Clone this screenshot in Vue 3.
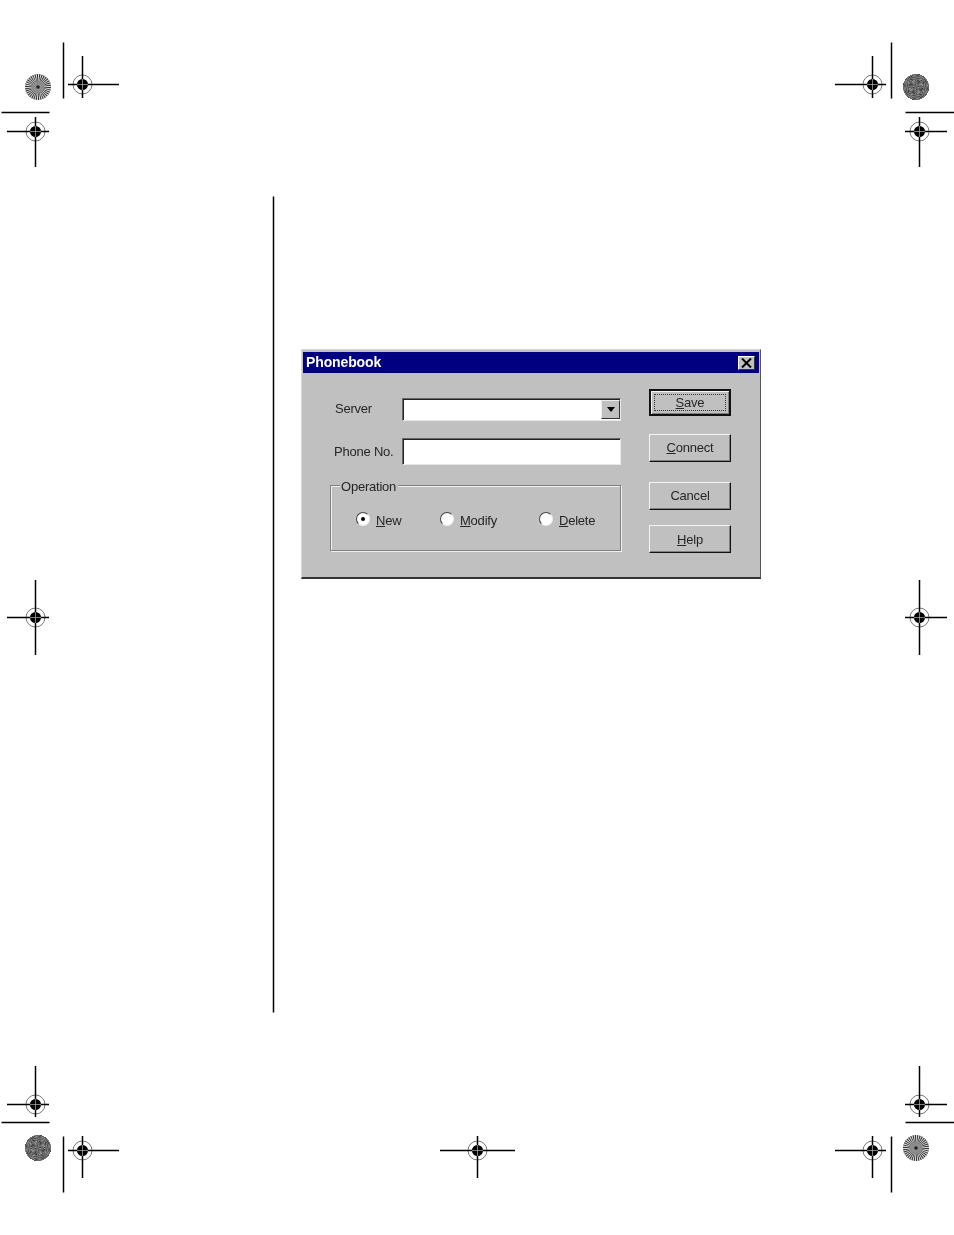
<script setup>
const marks = [
  { x: 82, y: 84, x1: 68, x2: 119, y1: 56, y2: 98 },
  { x: 35, y: 131, x1: 7, x2: 49, y1: 117, y2: 167 },
  { x: 872, y: 84, x1: 835, x2: 886, y1: 56, y2: 98 },
  { x: 919, y: 131, x1: 905, x2: 947, y1: 117, y2: 167 },
  { x: 35, y: 617, x1: 7, x2: 49, y1: 580, y2: 655 },
  { x: 919, y: 617, x1: 905, x2: 947, y1: 580, y2: 655 },
  { x: 35, y: 1104, x1: 7, x2: 49, y1: 1066, y2: 1117 },
  { x: 919, y: 1104, x1: 905, x2: 947, y1: 1066, y2: 1117 },
  { x: 82, y: 1150, x1: 68, x2: 119, y1: 1136, y2: 1178 },
  { x: 477, y: 1150, x1: 440, x2: 515, y1: 1136, y2: 1178 },
  { x: 872, y: 1150, x1: 835, x2: 886, y1: 1136, y2: 1178 }
]

const rules = [
  [63, 42, 63, 98], [891, 42, 891, 98],
  [63, 1136, 63, 1192], [891, 1136, 891, 1192],
  [1, 112, 49, 112], [905, 112, 954, 112],
  [1, 1122, 49, 1122], [905, 1122, 954, 1122],
  [273, 196, 273, 1012]
]

function wedges(cx, cy, r, count) {
  const out = []
  const step = (Math.PI * 2) / count
  for (let i = 0; i < count; i++) {
    const a = i * step
    const b = a + step / 2
    const p = (t) => `${(cx + r * Math.cos(t)).toFixed(2)},${(cy + r * Math.sin(t)).toFixed(2)}`
    out.push(`${cx},${cy} ${p(a)} ${p(b)}`)
  }
  return out
}

function moire(cx, cy, r) {
  const out = []
  for (let dy = -r; dy < r; dy++) {
    for (let dx = -r; dx < r; dx++) {
      const px = dx + 0.5
      const py = dy + 0.5
      const d = Math.hypot(px, py)
      if (d > r) continue
      const a = Math.atan2(py, px)
      const wave = Math.sin(a * 60) * Math.cos(d * 1.4) + 0.6 * Math.sin(a * 4) * Math.sin(d * 0.8)
      const g = Math.round(Math.max(50, Math.min(165, 105 + 42 * wave)))
      out.push({ x: cx + dx, y: cy + dy, fill: `rgb(${g},${g},${g})` })
    }
  }
  return out
}

const spokeDiscs = [
  { x: 38, y: 87 },
  { x: 916, y: 1148 }
].map((d) => ({ ...d, polys: wedges(d.x, d.y, 13, 34) }))

const moireDiscs = [
  { x: 916, y: 87 },
  { x: 38, y: 1148 }
].map((d) => ({ ...d, pixels: moire(d.x, d.y, 13) }))

const options = [
  { key: 'N', rest: 'ew', checked: true, cls: 'opt-new' },
  { key: 'M', rest: 'odify', checked: false, cls: 'opt-modify' },
  { key: 'D', rest: 'elete', checked: false, cls: 'opt-delete' }
]
</script>

<template>
  <div class="page">
    <svg class="marks" width="954" height="1235" viewBox="0 0 954 1235">
      <line v-for="(r, i) in rules" :key="'r' + i" :x1="r[0] + 0.5" :y1="r[1] + 0.5" :x2="r[2] + 0.5" :y2="r[3] + 0.5" stroke="#000" stroke-width="1.5" />
      <g v-for="(d, i) in spokeDiscs" :key="'s' + i">
        <circle :cx="d.x" :cy="d.y" r="13" fill="#dcdcdc" />
        <polygon v-for="(p, j) in d.polys" :key="j" :points="p" fill="#333" />
        <circle :cx="d.x" :cy="d.y" r="6" fill="#8a8a8a" fill-opacity="0.55" />
        <circle :cx="d.x" :cy="d.y" r="1.8" fill="#222" />
      </g>
      <g v-for="(d, i) in moireDiscs" :key="'d' + i">
        <rect v-for="(p, j) in d.pixels" :key="j" :x="p.x" :y="p.y" width="1" height="1" :fill="p.fill" />
      </g>
      <g v-for="(m, i) in marks" :key="'m' + i">
        <circle :cx="m.x + 0.5" :cy="m.y + 0.5" r="9.5" fill="none" stroke="#777" stroke-width="1" />
        <circle :cx="m.x + 0.5" :cy="m.y + 0.5" r="5.5" fill="#000" />
        <line :x1="m.x1" :y1="m.y + 0.5" :x2="m.x2" :y2="m.y + 0.5" stroke="#000" stroke-width="1.5" />
        <line :x1="m.x + 0.5" :y1="m.y1" :x2="m.x + 0.5" :y2="m.y2" stroke="#000" stroke-width="1.5" />
        <line :x1="m.x - 5" :y1="m.y + 0.5" :x2="m.x + 6" :y2="m.y + 0.5" stroke="#ccc" stroke-width="0.6" />
        <line :x1="m.x + 0.5" :y1="m.y - 5" :x2="m.x + 0.5" :y2="m.y + 6" stroke="#ccc" stroke-width="0.6" />
      </g>
    </svg>

    <div class="dialog">
      <div class="title">
        <span class="title-text">Phonebook</span>
        <span class="close">
          <svg width="11" height="10" viewBox="0 0 11 10"><path d="M1 0.5 L10 9.5 M10 0.5 L1 9.5" stroke="#000" stroke-width="2" fill="none" /></svg>
        </span>
      </div>
      <div class="body">
        <div class="form">
          <div class="row row-server">
            <span class="label label-server">Server</span>
            <div class="field field-combo">
              <span class="drop"><span class="arrow"></span></span>
            </div>
          </div>
          <div class="row row-phone">
            <span class="label label-phone">Phone No.</span>
            <div class="field field-phone"></div>
          </div>
          <div class="group">
            <span class="legend">Operation</span>
            <div v-for="o in options" :key="o.key" class="option" :class="o.cls">
              <span class="radio"><span v-if="o.checked" class="dot"></span></span>
              <span class="opt-text"><u>{{ o.key }}</u>{{ o.rest }}</span>
            </div>
          </div>
        </div>
        <div class="buttons">
          <div class="btn btn-default"><span class="focus"><u>S</u>ave</span></div>
          <div class="btn btn-connect"><span class="btn-text"><u>C</u>onnect</span></div>
          <div class="btn btn-cancel"><span class="btn-text">Cancel</span></div>
          <div class="btn btn-help"><span><u>H</u>elp</span></div>
        </div>
      </div>
    </div>
  </div>
</template>

<style scoped>
.page {
  position: relative;
  width: 954px;
  height: 1235px;
  box-sizing: border-box;
  padding: 349px 0 0 301px;
  background: #fff;
  overflow: hidden;
  font-family: "Liberation Sans", Arial, sans-serif;
  color: #262626;
}
.marks {
  position: absolute;
  left: 0;
  top: 0;
  filter: blur(0.35px);
}
.dialog {
  position: relative;
  width: 460px;
  height: 230px;
  box-sizing: border-box;
  background: #c0c0c0;
  border-top: 1px solid #d8d8d8;
  border-left: 1px solid #d8d8d8;
  border-right: 1px solid #555;
  border-bottom: 2px solid #333;
  padding: 2px 1px 0;
  filter: blur(0.4px);
}
.title {
  height: 21px;
  background: #000080;
  color: #fff;
  font-size: 14px;
  font-weight: 700;
  display: flex;
  align-items: center;
  justify-content: space-between;
  padding: 0 4px 0 3px;
}
.title-text {
  letter-spacing: -0.12px;
  margin-top: -2px;
}
.close {
  width: 17px;
  height: 14px;
  box-sizing: border-box;
  background: #c0c0c0;
  border: 1px solid;
  border-color: #fff #333 #333 #fff;
  display: flex;
  align-items: center;
  justify-content: center;
}
.body {
  display: flex;
  align-items: flex-start;
  padding: 16px 0 0 27px;
  font-size: 13px;
  letter-spacing: -0.22px;
}
.form {
  width: 291px;
  margin-top: 9px;
}
.row {
  display: flex;
  align-items: center;
}
.row-server {
  height: 23px;
}
.row-phone {
  height: 27px;
  margin-top: 17px;
}
.label {
  width: 68px;
  margin-right: 4px;
  box-sizing: border-box;
  flex: none;
}
.label-server {
  padding-left: 5px;
  margin-top: -2px;
}
.label-phone {
  padding-left: 4px;
  white-space: nowrap;
}
.field {
  flex: 1;
  height: 100%;
  box-sizing: border-box;
  background: #fff;
  border: 1px solid;
  border-color: #666 #e8e8e8 #e8e8e8 #666;
  box-shadow: inset 1px 1px 0 #222;
  display: flex;
  justify-content: flex-end;
}
.drop {
  width: 19px;
  margin: 1px 0;
  box-sizing: border-box;
  background: #c0c0c0;
  border: 1px solid;
  border-color: #eee #333 #333 #eee;
  display: flex;
  align-items: center;
  justify-content: center;
}
.arrow {
  width: 0;
  height: 0;
  border-left: 4px solid transparent;
  border-right: 4px solid transparent;
  border-top: 5px solid #000;
}
.group {
  position: relative;
  display: flex;
  height: 66px;
  margin-top: 20px;
  box-sizing: border-box;
  padding: 26px 0 0 25px;
  border: 1px solid #808080;
  box-shadow: 1px 1px 0 #efefef, inset 1px 1px 0 #efefef;
}
.legend {
  position: absolute;
  left: 9px;
  top: -7px;
  padding: 0 2px 0 1px;
  background: #c0c0c0;
  line-height: 15px;
}
.option {
  display: flex;
  align-items: center;
  gap: 6px;
  height: 14px;
}
.opt-new {
  width: 84px;
}
.opt-modify {
  width: 99px;
}
.radio {
  width: 14px;
  height: 14px;
  box-sizing: border-box;
  border-radius: 50%;
  background: #fff;
  border: 1.5px solid;
  border-color: #444 #eee #eee #444;
  display: flex;
  align-items: center;
  justify-content: center;
}
.dot {
  width: 4px;
  height: 4px;
  border-radius: 50%;
  background: #000;
}
.opt-text {
  margin-top: 2px;
}
.buttons {
  width: 82px;
  margin-left: 28px;
  display: flex;
  flex-direction: column;
}
.btn {
  height: 28px;
  box-sizing: border-box;
  background: #c0c0c0;
  border: 1px solid;
  border-color: #f4f4f4 #111 #111 #f4f4f4;
  box-shadow: inset -1px -1px 0 #808080;
  display: flex;
  align-items: center;
  justify-content: center;
}
.btn-text {
  margin-top: -2px;
}
.btn-default {
  height: 27px;
  border: 2px solid #111;
  box-shadow: inset 1px 1px 0 #f4f4f4, inset -1px -1px 0 #808080;
  padding: 3px;
}
.focus {
  flex: 1;
  align-self: stretch;
  border: 1px dotted #333;
  display: flex;
  align-items: center;
  justify-content: center;
}
.btn-connect {
  margin-top: 18px;
}
.btn-cancel {
  margin-top: 20px;
}
.btn-help {
  margin-top: 15px;
}
</style>

<style>
html, body {
  background: #fff;
}
</style>
